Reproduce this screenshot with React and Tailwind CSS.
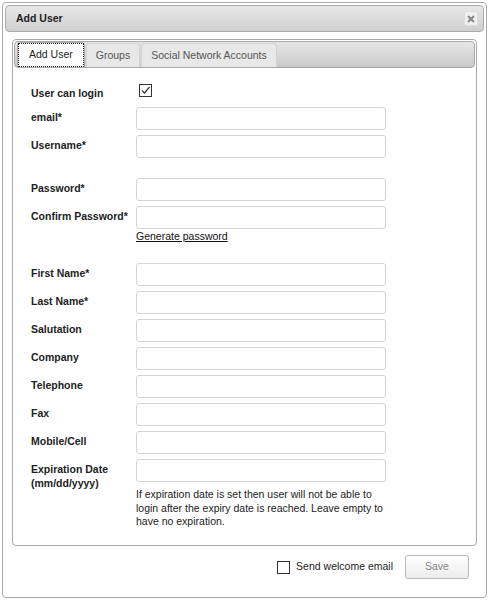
const labelCls = "w-[105px] shrink-0 pt-[3px] text-[10.5px] font-bold leading-[14px] text-[#222]";
const inputCls = "h-[23px] w-[250px] rounded-[3px] border border-[#d4d4d4] bg-white";

const Row = ({ label, children, className = "" }) => (
  <div className={`flex ${className}`}>
    <div className={labelCls}>{label}</div>
    <div>{children}</div>
  </div>
);

const Field = ({ label, className = "mb-[5px]" }) => (
  <Row label={label} className={className}>
    <div className={inputCls}></div>
  </Row>
);

export default function App() {
  return (
    <div className="relative h-[602px] w-[489px] bg-white pl-[2px] pt-[2px]" style={{ fontFamily: '"Liberation Sans", Arial, sans-serif' }}>
      <div className="flex h-[596px] w-[485px] flex-col rounded-[4px] border border-[#aaa] p-[2px]">
        {/* title bar */}
        <div className="flex h-[27px] items-center justify-between rounded-[4px] border border-[#aaa] bg-gradient-to-b from-[#e8e8e8] to-[#cfcfcf] pl-[10px] pr-[5px]">
          <span className="text-[10.5px] font-bold text-[#222]">Add User</span>
          <div className="flex h-[15px] w-[14px] items-center justify-center rounded-[2px] border border-[#ddd] bg-[#f0f0f0]">
            <svg width="8" height="8" viewBox="0 0 8 8">
              <path d="M1 1 L7 7 M7 1 L1 7" stroke="#888" strokeWidth="2" />
            </svg>
          </div>
        </div>

        {/* tab panel */}
        <div className="ml-[7px] mt-[7px] flex h-[507px] w-[465px] flex-col rounded-[4px] border border-[#aaa] p-[1px]">
          <div className="flex h-[27px] items-end gap-[1px] rounded-[4px] border border-[#aaa] bg-gradient-to-b from-[#e6e6e6] to-[#cacaca] pl-[2px]">
            <div className="flex h-[25px] items-stretch rounded-t-[4px] border border-b-0 border-[#aaa] bg-white">
              <span className="flex items-center border border-dotted border-[#222] px-[10px] text-[10.5px] text-[#222]">Add User</span>
            </div>
            <div className="flex h-[24px] items-center rounded-t-[4px] border border-b-0 border-[#d3d3d3] bg-[#e8e8e8] px-[9px] text-[10.5px] text-[#555]">
              Groups
            </div>
            <div className="flex h-[24px] items-center rounded-t-[4px] border border-b-0 border-[#d3d3d3] bg-[#e8e8e8] px-[9px] text-[10.5px] text-[#555]">
              Social Network Accounts
            </div>
          </div>

          <div className="pl-[17px] pt-[15px]">
            <Row label="User can login" className="mb-[5px] h-[19px]">
              <div className="ml-[3px] mt-[1px] flex h-[13px] w-[13px] items-center justify-center border border-[#333] bg-white">
                <svg width="11" height="11" viewBox="0 0 11 11">
                  <path d="M2 5.5 L4.5 8 L9.5 2" stroke="#333" strokeWidth="1.2" fill="none" />
                </svg>
              </div>
            </Row>
            <Field label="email*" />
            <Field label="Username*" className="mb-[20px]" />
            <Field label="Password*" />
            <Row label="Confirm Password*">
              <div className={inputCls}></div>
              <div className="mt-[1px] text-[10.5px] leading-[13px] text-[#111] underline">Generate password</div>
            </Row>
            <div className="h-[20px]"></div>
            <Field label="First Name*" />
            <Field label="Last Name*" />
            <Field label="Salutation" />
            <Field label="Company" />
            <Field label="Telephone" />
            <Field label="Fax" />
            <Field label="Mobile/Cell" />
            <Row label={<>Expiration Date<br />(mm/dd/yyyy)</>}>
              <div className={inputCls}></div>
              <p className="mt-[6px] w-[256px] text-[10.5px] leading-[13.5px] text-[#222]">
                If expiration date is set then user will not be able to login after the expiry date is reached. Leave empty to have no expiration.
              </p>
            </Row>
          </div>
        </div>

        {/* footer */}
        <div className="mt-[9px] flex items-center justify-end pr-[15px]">
          <div className="flex items-center gap-[6px]">
            <div className="h-[13px] w-[13px] border border-[#333] bg-white"></div>
            <span className="text-[10.5px] text-[#222]">Send welcome email</span>
          </div>
          <button className="ml-[12px] h-[24px] w-[64px] rounded-[3px] border border-[#bbb] bg-gradient-to-b from-white to-[#ececec] text-[10.5px] text-[#888]">
            Save
          </button>
        </div>
      </div>
    </div>
  );
}
